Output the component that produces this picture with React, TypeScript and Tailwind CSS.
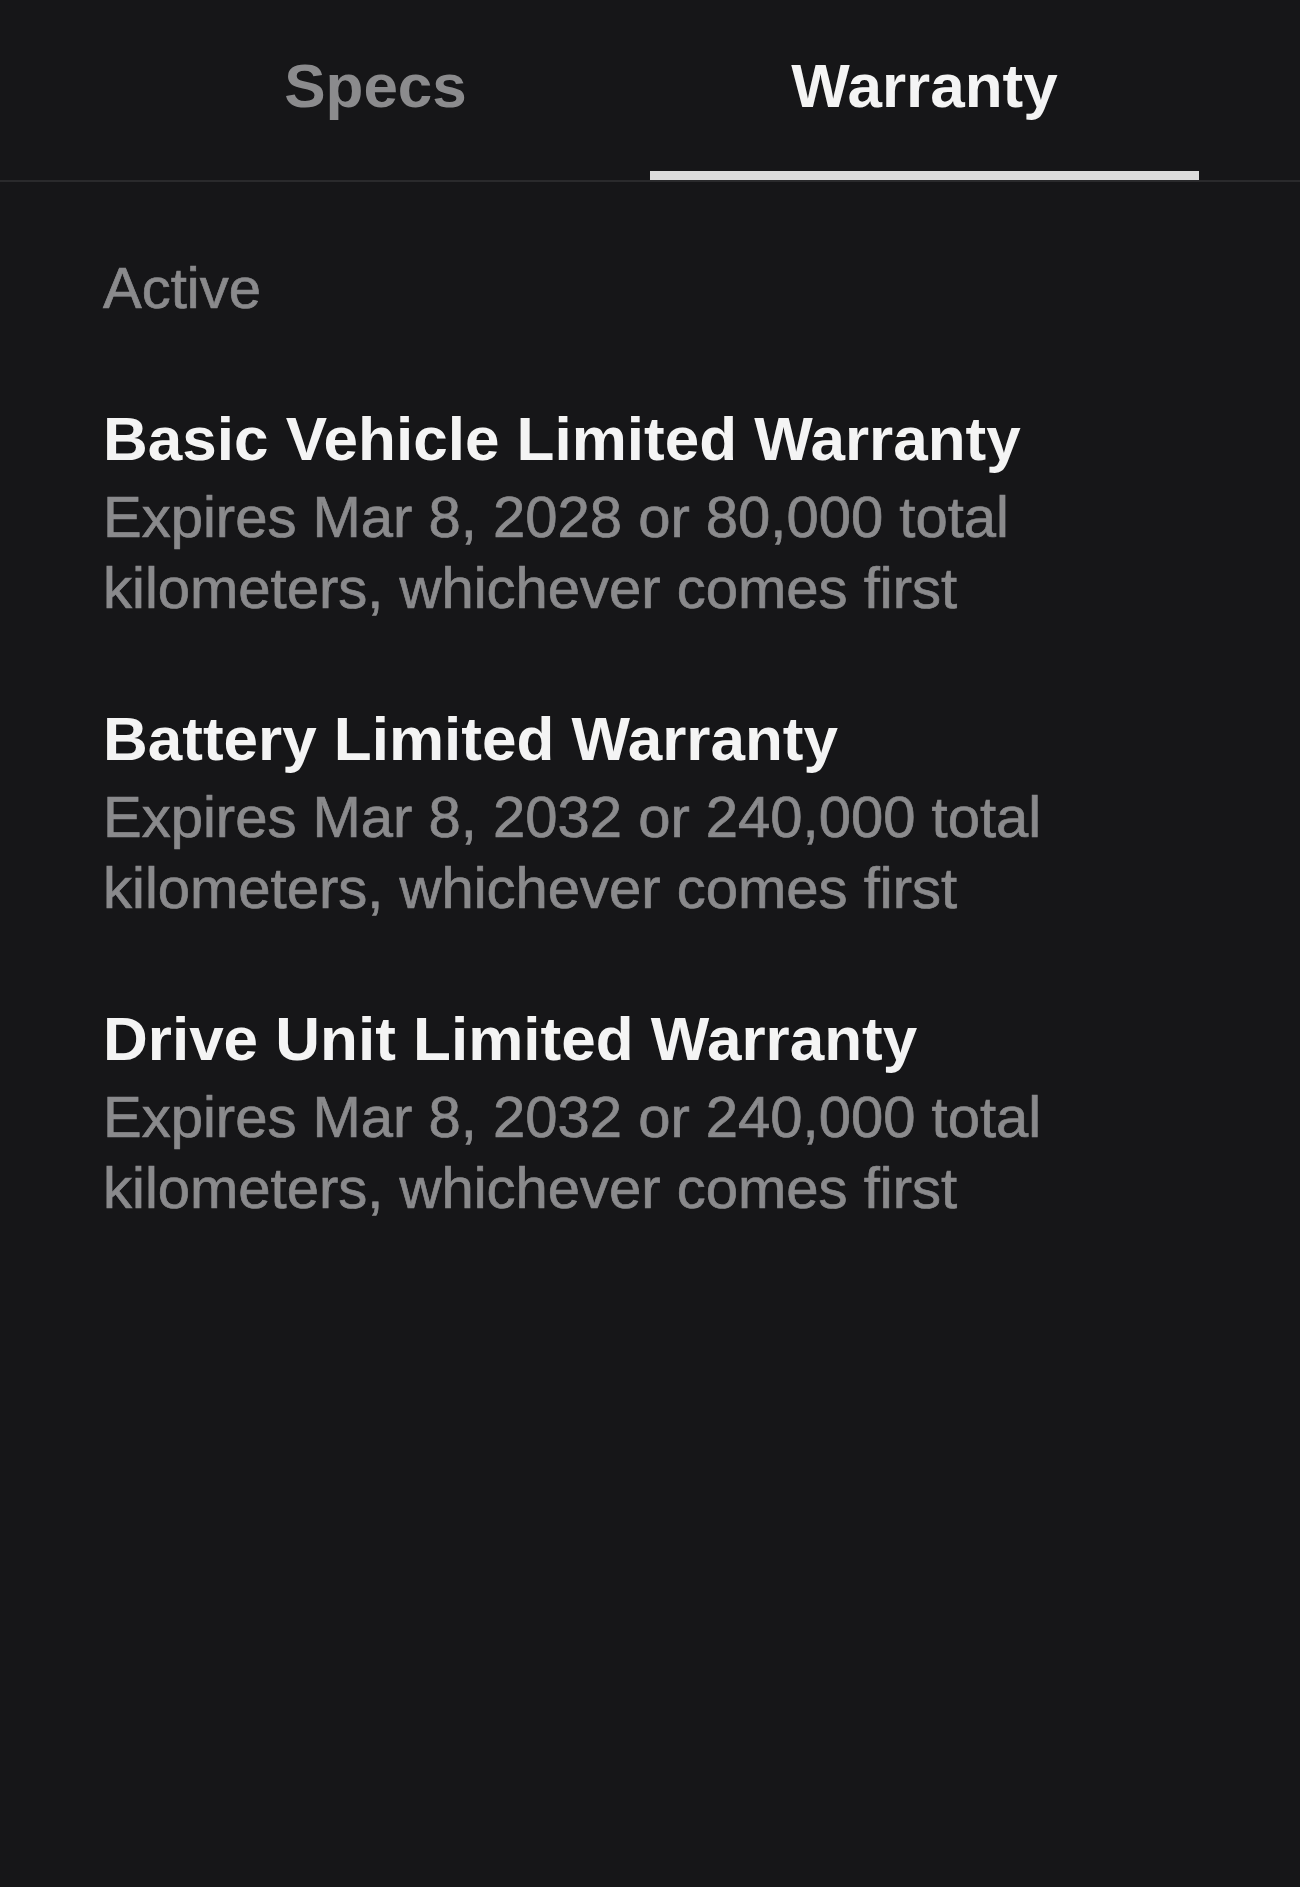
const warranties = [
  {
    title: 'Basic Vehicle Limited Warranty',
    lines: ['Expires Mar 8, 2028 or 80,000 total', 'kilometers, whichever comes first'],
  },
  {
    title: 'Battery Limited Warranty',
    lines: ['Expires Mar 8, 2032 or 240,000 total', 'kilometers, whichever comes first'],
  },
  {
    title: 'Drive Unit Limited Warranty',
    lines: ['Expires Mar 8, 2032 or 240,000 total', 'kilometers, whichever comes first'],
  },
];

export default function App() {
  return (
    <div
      className="min-h-[1887px] w-[1300px] bg-[#161618] text-white"
      style={{ fontFamily: "'Liberation Sans', Arial, sans-serif" }}
    >
      {/* Tabs */}
      <div className="border-b-2 border-[#2a2a2c]">
        <div className="flex px-[101px]">
          <div className="flex h-[180px] w-[550px] justify-center pt-[55px] text-[62px] font-bold leading-[62px] text-[#8b8b8d]">
            Specs
          </div>
          <div className="flex h-[180px] w-[550px] justify-center border-b-[9px] border-[#dcdcdc] pt-[55px] text-[62px] font-bold leading-[62px] text-[#f4f4f4]">
            Warranty
          </div>
        </div>
      </div>

      {/* Warranty list */}
      <div className="flex flex-col gap-[74px] pl-[103px] pt-[71px]">
        <div className="text-[58px] leading-[70px] text-[#8a8a8c] [-webkit-text-stroke:0.7px_#8a8a8c]">Active</div>
        {warranties.map((w) => (
          <div key={w.title} className="flex flex-col">
            <div className="text-[62px] font-bold leading-[84px] text-[#f4f4f4]">{w.title}</div>
            {w.lines.map((l, i) => (
              <div key={i} className="text-[58px] leading-[71px] text-[#8a8a8c] [-webkit-text-stroke:0.7px_#8a8a8c]">
                {l}
              </div>
            ))}
          </div>
        ))}
      </div>
    </div>
  );
}
